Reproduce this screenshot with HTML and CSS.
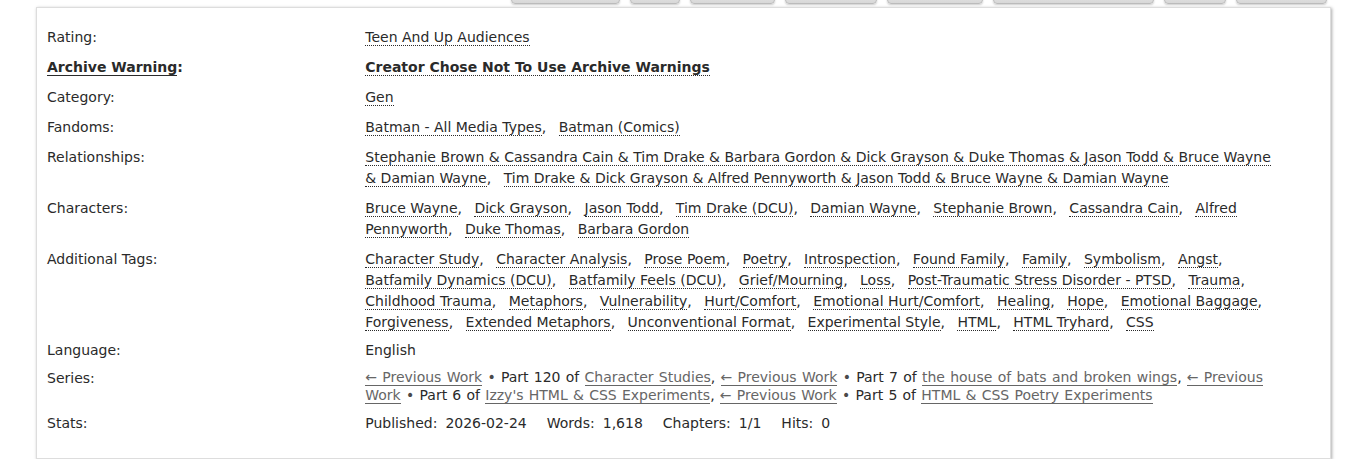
FILE: index.html
```html
<!DOCTYPE html>
<html lang="en">
<head>
<meta charset="utf-8">
<title>Work meta</title>
<link rel="stylesheet" href="styles.css">
</head>
<body>
<ul class="work-nav">
  <li class="btn w109"></li>
  <li class="btn w50"></li>
  <li class="btn w85"></li>
  <li class="btn w92"></li>
  <li class="btn w96"></li>
  <li class="btn w161"></li>
  <li class="btn w62"></li>
  <li class="btn w91"></li>
</ul>
<div class="wrapper">
  <dl class="meta">
    <dt>Rating:</dt>
    <dd><ul class="tags"><li><a class="tag">Teen And Up Audiences</a></li></ul></dd>

    <dt class="strong"><a class="help">Archive Warning</a>:</dt>
    <dd class="strong"><ul class="tags"><li><a class="tag">Creator Chose Not To Use Archive Warnings</a></li></ul></dd>

    <dt>Category:</dt>
    <dd><ul class="tags"><li><a class="tag">Gen</a></li></ul></dd>

    <dt>Fandoms:</dt>
    <dd><ul class="tags"><li><a class="tag">Batman - All Media Types</a></li> <li><a class="tag">Batman (Comics)</a></li></ul></dd>

    <dt>Relationships:</dt>
    <dd><ul class="tags"><li><a class="tag">Stephanie Brown &amp; Cassandra Cain &amp; Tim Drake &amp; Barbara Gordon &amp; Dick Grayson &amp; Duke Thomas &amp; Jason Todd &amp; Bruce Wayne &amp; Damian Wayne</a></li> <li><a class="tag">Tim Drake &amp; Dick Grayson &amp; Alfred Pennyworth &amp; Jason Todd &amp; Bruce Wayne &amp; Damian Wayne</a></li></ul></dd>

    <dt>Characters:</dt>
    <dd><ul class="tags"><li><a class="tag">Bruce Wayne</a></li> <li><a class="tag">Dick Grayson</a></li> <li><a class="tag">Jason Todd</a></li> <li><a class="tag">Tim Drake (DCU)</a></li> <li><a class="tag">Damian Wayne</a></li> <li><a class="tag">Stephanie Brown</a></li> <li><a class="tag">Cassandra Cain</a></li> <li><a class="tag">Alfred Pennyworth</a></li> <li><a class="tag">Duke Thomas</a></li> <li><a class="tag">Barbara Gordon</a></li></ul></dd>

    <dt>Additional Tags:</dt>
    <dd><ul class="tags"><li><a class="tag">Character Study</a></li> <li><a class="tag">Character Analysis</a></li> <li><a class="tag">Prose Poem</a></li> <li><a class="tag">Poetry</a></li> <li><a class="tag">Introspection</a></li> <li><a class="tag">Found Family</a></li> <li><a class="tag">Family</a></li> <li><a class="tag">Symbolism</a></li> <li><a class="tag">Angst</a></li> <li><a class="tag">Batfamily Dynamics (DCU)</a></li> <li><a class="tag">Batfamily Feels (DCU)</a></li> <li><a class="tag">Grief/Mourning</a></li> <li><a class="tag">Loss</a></li> <li><a class="tag">Post-Traumatic Stress Disorder - PTSD</a></li> <li><a class="tag">Trauma</a></li> <li><a class="tag">Childhood Trauma</a></li> <li><a class="tag">Metaphors</a></li> <li><a class="tag">Vulnerability</a></li> <li><a class="tag">Hurt/Comfort</a></li> <li><a class="tag">Emotional Hurt/Comfort</a></li> <li><a class="tag">Healing</a></li> <li><a class="tag">Hope</a></li> <li><a class="tag">Emotional Baggage</a></li> <li><a class="tag">Forgiveness</a></li> <li><a class="tag">Extended Metaphors</a></li> <li><a class="tag">Unconventional Format</a></li> <li><a class="tag">Experimental Style</a></li> <li><a class="tag">HTML</a></li> <li><a class="tag">HTML Tryhard</a></li> <li><a class="tag">CSS</a></li></ul></dd>

    <dt class="lang">Language:</dt>
    <dd class="lang">English</dd>

    <dt>Series:</dt>
    <dd class="series"><span class="part"><a class="slink">← Previous Work</a> <span class="dot">•</span> Part 120 of <a class="slink">Character Studies</a></span>, <span class="part"><a class="slink">← Previous Work</a> <span class="dot">•</span> Part 7 of <a class="slink">the house of bats and broken wings</a></span>, <span class="part"><a class="slink">← Previous Work</a> <span class="dot">•</span> Part 6 of <a class="slink">Izzy's HTML &amp; CSS Experiments</a></span>, <span class="part"><a class="slink">← Previous Work</a> <span class="dot">•</span> Part 5 of <a class="slink">HTML &amp; CSS Poetry Experiments</a></span></dd>

    <dt>Stats:</dt>
    <dd>
      <dl class="stats">
        <dt>Published:</dt><dd>2026-02-24</dd>
        <dt>Words:</dt><dd>1,618</dd>
        <dt>Chapters:</dt><dd>1/1</dd>
        <dt>Hits:</dt><dd>0</dd>
      </dl>
    </dd>
  </dl>
</div>
</body>
</html>
```
FILE: styles.css
```css
html, body {
  margin: 0;
  padding: 0;
  background: #fff;
}

body {
  font-family: "DejaVu Sans", Verdana, sans-serif;
  font-size: 14px;
  line-height: 21px;
  color: #2a2a2a;
  overflow: hidden;
}

.work-nav {
  list-style: none;
  margin: -17px 0 0 0;
  padding: 0 39px 0 0;
  display: flex;
  justify-content: flex-end;
  gap: 10px;
  height: 20px;
}

.btn {
  height: 19px;
  background: linear-gradient(#f4f4f4, #d8d8d8);
  border: 1px solid #bbb;
  border-radius: 4px;
  box-shadow: 0 1px 2px #ccc;
}

.w109 { width: 107px; }
.w50 { width: 48px; }
.w85 { width: 83px; }
.w92 { width: 90px; }
.w96 { width: 94px; }
.w161 { width: 159px; }
.w62 { width: 60px; }
.w91 { width: 89px; }

.wrapper {
  box-sizing: border-box;
  width: 1295px;
  margin: 4px 0 0 36px;
  border: 1px solid #ddd;
  box-shadow: 1px 1px 3px #aaa;
  background: #fff;
}

.meta {
  display: grid;
  grid-template-columns: 25% 71.8%;
  margin: 0;
  padding: 19px 10px 15px 10px;
}

.meta > dt,
.meta > dd {
  margin: 0 0 9px 0;
}

.meta > .lang {
  margin-top: -2px;
  margin-bottom: 7px;
}

.strong {
  font-weight: bold;
}

.help {
  border-bottom: 1px solid #2a2a2a;
}

.tags {
  list-style: none;
  margin: 0;
  padding: 0;
  display: inline;
}

.tags li {
  display: inline;
}

.tags li:not(:last-child)::after {
  content: ",";
  padding-right: 8px;
}

.tag {
  color: #2a2a2a;
  border-bottom: 1px dotted #2a2a2a;
}

.series {
  line-height: 18px;
  word-spacing: 0.8px;
}

.slink {
  color: #666;
  border-bottom: 1px solid #666;
}

.dot {
  font-size: 14px;
  line-height: 0;
  color: #4a4a4a;
}

.stats {
  display: flex;
  margin: 0;
}

.stats dt {
  margin: 0 8px 0 0;
}

.stats dd {
  margin: 0 20px 0 0;
}
```
